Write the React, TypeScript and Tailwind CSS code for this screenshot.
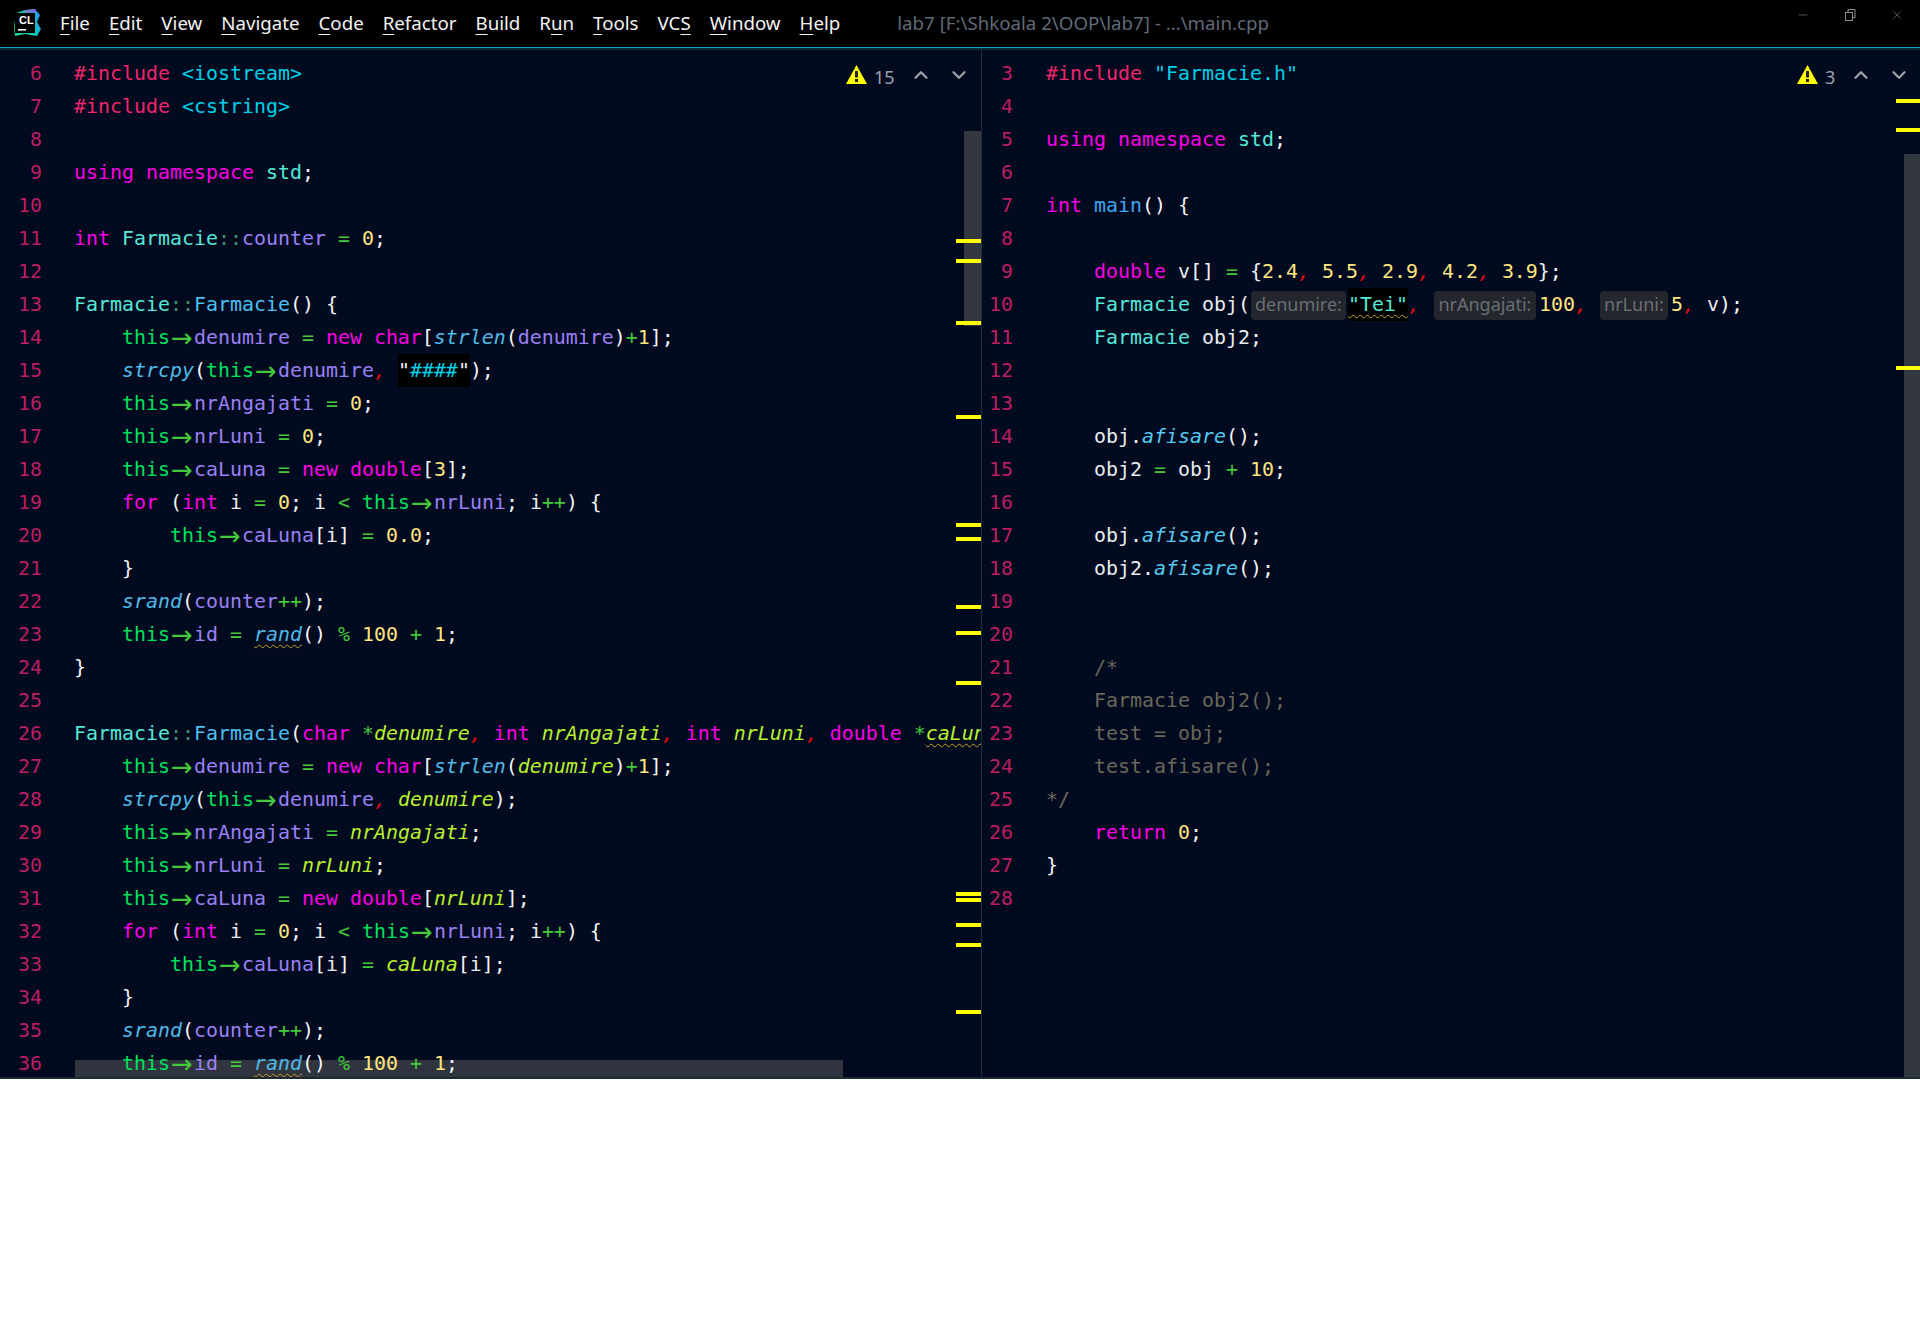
import type { ReactNode } from "react";
import { ChevronDown, ChevronUp, Minus, X } from "lucide-react";

type Tok = ReactNode;

const span = (cls: string) => (text: string) => <span className={cls}>{text}</span>;

const pre = span("text-[#f0256c]");
const inc = span("text-[#00cfe6]");
const kw = span("text-[#fa00e6]");
const cls = span("text-[#55e8d8]");
const ctor = span("text-[#4cc0f0]");
const scope = span("text-[#3f8f70]");
const mem = span("text-[#9a80f4]");
const op = span("text-[#44c93c]");
const num = span("text-[#ffe680]");
const me = span("text-[#00e05c]");
const fn = span("italic text-[#4fb9e6]");
const par = span("italic text-[#b8f02e]");
const com = span("italic text-[#e00d0d]");
const pl = span("text-[#f2f4f6]");
const vr = span("text-[#e8ecf0]");
const main = span("text-[#3da5f0]");
const obj = span("italic text-[#55c8ee]");
const gray = span("text-[#6a675a]");
const wavy = "underline decoration-wavy decoration-[#c9a227] decoration-1 underline-offset-[3px]";

const Arrow = () => (
  <span className="inline-block h-[33px] w-[24px] overflow-visible text-center align-top font-['DejaVu_Sans'] text-[26px] leading-[35px] text-[#44c93c]">
    →
  </span>
);
const ths = () => (
  <>
    {me("this")}
    <Arrow />
  </>
);

const Hint = ({ text, w, after }: { text: string; w: string; after: string }) => (
  <span
    className={`inline-block h-[29px] rounded-[4px] bg-[#23262c] text-center align-middle font-['Noto_Sans'] text-[18px] leading-[27px] text-[#6a6e74] ${w} ${after}`}
  >
    {text}
  </span>
);

const leftLines: Tok[][] = [
  [pre("#include "), inc("<iostream>")],
  [pre("#include "), inc("<cstring>")],
  [],
  [kw("using namespace "), cls("std"), pl(";")],
  [],
  [kw("int "), cls("Farmacie"), scope("::"), mem("counter"), op(" = "), num("0"), pl(";")],
  [],
  [cls("Farmacie"), scope("::"), ctor("Farmacie"), pl("() {")],
  ["    ", ths(), mem("denumire"), op(" = "), kw("new char"), pl("["), fn("strlen"), pl("("), mem("denumire"), pl(")"), op("+"), num("1"), pl("];")],
  ["    ", fn("strcpy"), pl("("), ths(), mem("denumire"), com(", "), <span className="inline-block h-[33px] bg-black align-top"><span className="text-[#f2f4f6]">"</span><span className="text-[#00cfe6]">####</span><span className="text-[#f2f4f6]">"</span></span>, pl(");")],
  ["    ", ths(), mem("nrAngajati"), op(" = "), num("0"), pl(";")],
  ["    ", ths(), mem("nrLuni"), op(" = "), num("0"), pl(";")],
  ["    ", ths(), mem("caLuna"), op(" = "), kw("new double"), pl("["), num("3"), pl("];")],
  ["    ", kw("for"), pl(" ("), kw("int "), vr("i"), op(" = "), num("0"), pl("; "), vr("i"), op(" < "), ths(), mem("nrLuni"), pl("; "), vr("i"), op("++"), pl(") {")],
  ["        ", ths(), mem("caLuna"), pl("["), vr("i"), pl("]"), op(" = "), num("0.0"), pl(";")],
  [pl("    }")],
  ["    ", fn("srand"), pl("("), mem("counter"), op("++"), pl(");")],
  ["    ", ths(), mem("id"), op(" = "), <span className={`italic text-[#4fb9e6] ${wavy}`}>rand</span>, pl("()"), op(" % "), num("100"), op(" + "), num("1"), pl(";")],
  [pl("}")],
  [],
  [cls("Farmacie"), scope("::"), ctor("Farmacie"), pl("("), kw("char "), op("*"), par("denumire"), com(", "), kw("int "), par("nrAngajati"), com(", "), kw("int "), par("nrLuni"), com(", "), kw("double "), op("*"), <span className={`italic text-[#b8f02e] ${wavy}`}>caLuna</span>],
  ["    ", ths(), mem("denumire"), op(" = "), kw("new char"), pl("["), fn("strlen"), pl("("), par("denumire"), pl(")"), op("+"), num("1"), pl("];")],
  ["    ", fn("strcpy"), pl("("), ths(), mem("denumire"), com(", "), par("denumire"), pl(");")],
  ["    ", ths(), mem("nrAngajati"), op(" = "), par("nrAngajati"), pl(";")],
  ["    ", ths(), mem("nrLuni"), op(" = "), par("nrLuni"), pl(";")],
  ["    ", ths(), mem("caLuna"), op(" = "), kw("new double"), pl("["), par("nrLuni"), pl("];")],
  ["    ", kw("for"), pl(" ("), kw("int "), vr("i"), op(" = "), num("0"), pl("; "), vr("i"), op(" < "), ths(), mem("nrLuni"), pl("; "), vr("i"), op("++"), pl(") {")],
  ["        ", ths(), mem("caLuna"), pl("["), vr("i"), pl("]"), op(" = "), par("caLuna"), pl("["), vr("i"), pl("];")],
  [pl("    }")],
  ["    ", fn("srand"), pl("("), mem("counter"), op("++"), pl(");")],
  ["    ", ths(), mem("id"), op(" = "), <span className={`italic text-[#4fb9e6] ${wavy}`}>rand</span>, pl("()"), op(" % "), num("100"), op(" + "), num("1"), pl(";")],
];

const rightLines: Tok[][] = [
  [pre("#include "), inc('"Farmacie.h"')],
  [],
  [kw("using namespace "), cls("std"), pl(";")],
  [],
  [kw("int "), main("main"), pl("() {")],
  [],
  ["    ", kw("double "), vr("v"), pl("[]"), op(" = "), pl("{"), num("2.4"), com(", "), num("5.5"), com(", "), num("2.9"), com(", "), num("4.2"), com(", "), num("3.9"), pl("};")],
  [
    "    ", cls("Farmacie "), vr("obj"), pl("("),
    <Hint text="denumire:" w="w-[95px]" after="ml-px mr-[2px]" />,
    <span className={`inline-block h-[33px] bg-black align-top text-[#55e8d8] ${wavy}`}>"Tei"</span>,
    com(", "),
    <Hint text="nrAngajati:" w="w-[102px]" after="ml-[2px] mr-[3px]" />,
    num("100"), com(", "),
    <Hint text="nrLuni:" w="w-[68px]" after="ml-px mr-[3px]" />,
    num("5"), com(", "), vr("v"), pl(");"),
  ],
  ["    ", cls("Farmacie "), vr("obj2"), pl(";")],
  [],
  [],
  ["    ", vr("obj"), pl("."), obj("afisare"), pl("();")],
  ["    ", vr("obj2"), op(" = "), vr("obj"), op(" + "), num("10"), pl(";")],
  [],
  ["    ", vr("obj"), pl("."), obj("afisare"), pl("();")],
  ["    ", vr("obj2"), pl("."), obj("afisare"), pl("();")],
  [],
  [],
  ["    ", gray("/*")],
  ["    ", gray("Farmacie obj2();")],
  ["    ", gray("test = obj;")],
  ["    ", gray("test.afisare();")],
  [gray("*/")],
  ["    ", kw("return "), num("0"), pl(";")],
  [pl("}")],
  [],
];

function Warn({ count, countW, className }: { count: string; countW: string; className: string }) {
  return (
    <div className={`absolute top-[15px] flex items-center ${className}`}>
      <svg width="21" height="19" viewBox="0 0 21 19" className="mr-[7px] -translate-y-[3px]">
        <path d="M10.5 0 21 19H0Z" fill="#ffff00" />
        <rect x="9" y="6" width="3" height="6.5" fill="#222" />
        <rect x="9" y="14" width="3" height="3" fill="#222" />
      </svg>
      <span className={`font-['Noto_Sans'] text-[18px] leading-[24px] text-[#9aa4b0] ${countW}`}>{count}</span>
      <ChevronUp size={22} strokeWidth={2.4} className="ml-[15px] -translate-y-[2px] text-[#a0a4a8]" />
      <ChevronDown size={22} strokeWidth={2.4} className="ml-[16px] -translate-y-[2px] text-[#a0a4a8]" />
    </div>
  );
}

function Code({ lines, start, numW, gap }: { lines: Tok[][]; start: number; numW: string; gap: string }) {
  return (
    <div className="relative flex flex-col pt-[7px] font-['DejaVu_Sans_Mono'] text-[19.93px] leading-[33px]">
      {lines.map((line, i) => (
        <div key={i} className="flex h-[33px] whitespace-pre">
          <span className={`shrink-0 text-right text-[#bb1e63] ${numW} ${gap}`}>{start + i}</span>
          <span className="whitespace-pre">
            {line.map((t, j) => (
              <span key={j}>{t}</span>
            ))}
          </span>
        </div>
      ))}
    </div>
  );
}

const menu: [string, string, string][] = [
  ["", "F", "ile"],
  ["", "E", "dit"],
  ["", "V", "iew"],
  ["", "N", "avigate"],
  ["", "C", "ode"],
  ["", "R", "efactor"],
  ["", "B", "uild"],
  ["R", "u", "n"],
  ["", "T", "ools"],
  ["VC", "S", ""],
  ["", "W", "indow"],
  ["", "H", "elp"],
];

const Stripe = ({ top, className }: { top: string; className: string }) => (
  <div className={`absolute h-[4px] bg-[#ffff00] ${top} ${className}`} />
);

const leftMarks = [
  "top-[189px]", "top-[209px]", "top-[271px]", "top-[365px]", "top-[473px]", "top-[487px]", "top-[555px]",
  "top-[581px]", "top-[631px]", "top-[842px]", "top-[848px]", "top-[873px]", "top-[893px]", "top-[960px]",
];
const rightMarks = ["top-[49px]", "top-[78px]", "top-[316px]"];

export default function App() {
  return (
    <div className="flex h-[1326px] w-[1920px] flex-col overflow-hidden bg-white">
      <header className="relative flex h-[47px] shrink-0 items-center bg-black pb-[1px] pl-[13px]">
        <svg width="28" height="28" viewBox="0 0 28 28" className="mr-[19px]">
          <defs>
            <linearGradient id="cl" x1="0" y1="0.8" x2="1" y2="0.4">
              <stop offset="0" stopColor="#1fdc8a" />
              <stop offset="0.55" stopColor="#14c8b0" />
              <stop offset="1" stopColor="#1f9fe4" />
            </linearGradient>
          </defs>
          <path d="M3 4 12 1l10-1 5 6-3 7 4 7-4 7-12-2-10 2-1-9Z" fill="url(#cl)" />
          <path d="M12 1l10-1 2 3-12 1Z" fill="#b04cd8" opacity="0.6" />
          <rect x="2" y="4" width="20" height="20" fill="#000" />
          <rect x="5" y="20" width="8" height="1.6" fill="#fff" />
        </svg>
        <span className="absolute left-[19px] top-[14px] font-['Liberation_Sans'] text-[11px] leading-[12px] font-bold text-white">
          CL
        </span>
        <nav className="flex gap-[19px] font-['Noto_Sans'] text-[18.7px] text-[#f2f2f2]">
          {menu.map(([a, u, b]) => (
            <span key={u + b}>
              {a}
              <span className="underline underline-offset-[4px]">{u}</span>
              {b}
            </span>
          ))}
        </nav>
        <span className="ml-[57px] font-['Noto_Sans'] text-[18.7px] text-[#5f6a76]">
          lab7 [F:\Shkoala 2\OOP\lab7] - ...\main.cpp
        </span>
        <div className="absolute top-[8px] right-[16px] flex items-center gap-[33px] text-[#8c8c8c]">
          <Minus size={14} strokeWidth={1} />
          <svg width="14" height="14" viewBox="0 0 14 14" fill="none" stroke="currentColor">
            <rect x="2.5" y="4.5" width="7" height="8" />
            <path d="M5 4V1.5h7v8H9.5" />
          </svg>
          <X size={14} strokeWidth={1} />
        </div>
      </header>
      <div className="h-[1px] shrink-0 bg-[#1ba3cc]" />
      <div className="h-[2px] shrink-0 bg-[#0e2c36]" />
      <main className="flex h-[1029px] shrink-0 border-b-2 border-[#1d2a30] bg-[#010a1f]">
        <section className="relative h-full w-[982px] shrink-0 overflow-hidden border-r border-[#17323c]">
          <div className="absolute bottom-0 left-[75px] h-[17px] w-[768px] bg-[#2f343e]" />
          <Code lines={leftLines} start={6} numW="w-[42px]" gap="mr-[32px]" />
          <Warn count="15" countW="w-[21px]" className="left-[846px]" />
          <div className="absolute top-[81px] right-0 h-[195px] w-[17px] bg-[#33373f]" />
          {leftMarks.map((t) => (
            <Stripe key={t} top={t} className="left-[956px] w-[25px]" />
          ))}
        </section>
        <section className="relative h-full min-w-0 flex-1 overflow-hidden">
          <Code lines={rightLines} start={3} numW="w-[31px]" gap="mr-[33px]" />
          <Warn count="3" countW="w-[10px]" className="left-[815px]" />
          <div className="absolute top-[104px] right-0 bottom-0 w-[16px] bg-[#33373f]" />
          {rightMarks.map((t) => (
            <Stripe key={t} top={t} className="right-0 w-[24px]" />
          ))}
        </section>
      </main>
    </div>
  );
}
